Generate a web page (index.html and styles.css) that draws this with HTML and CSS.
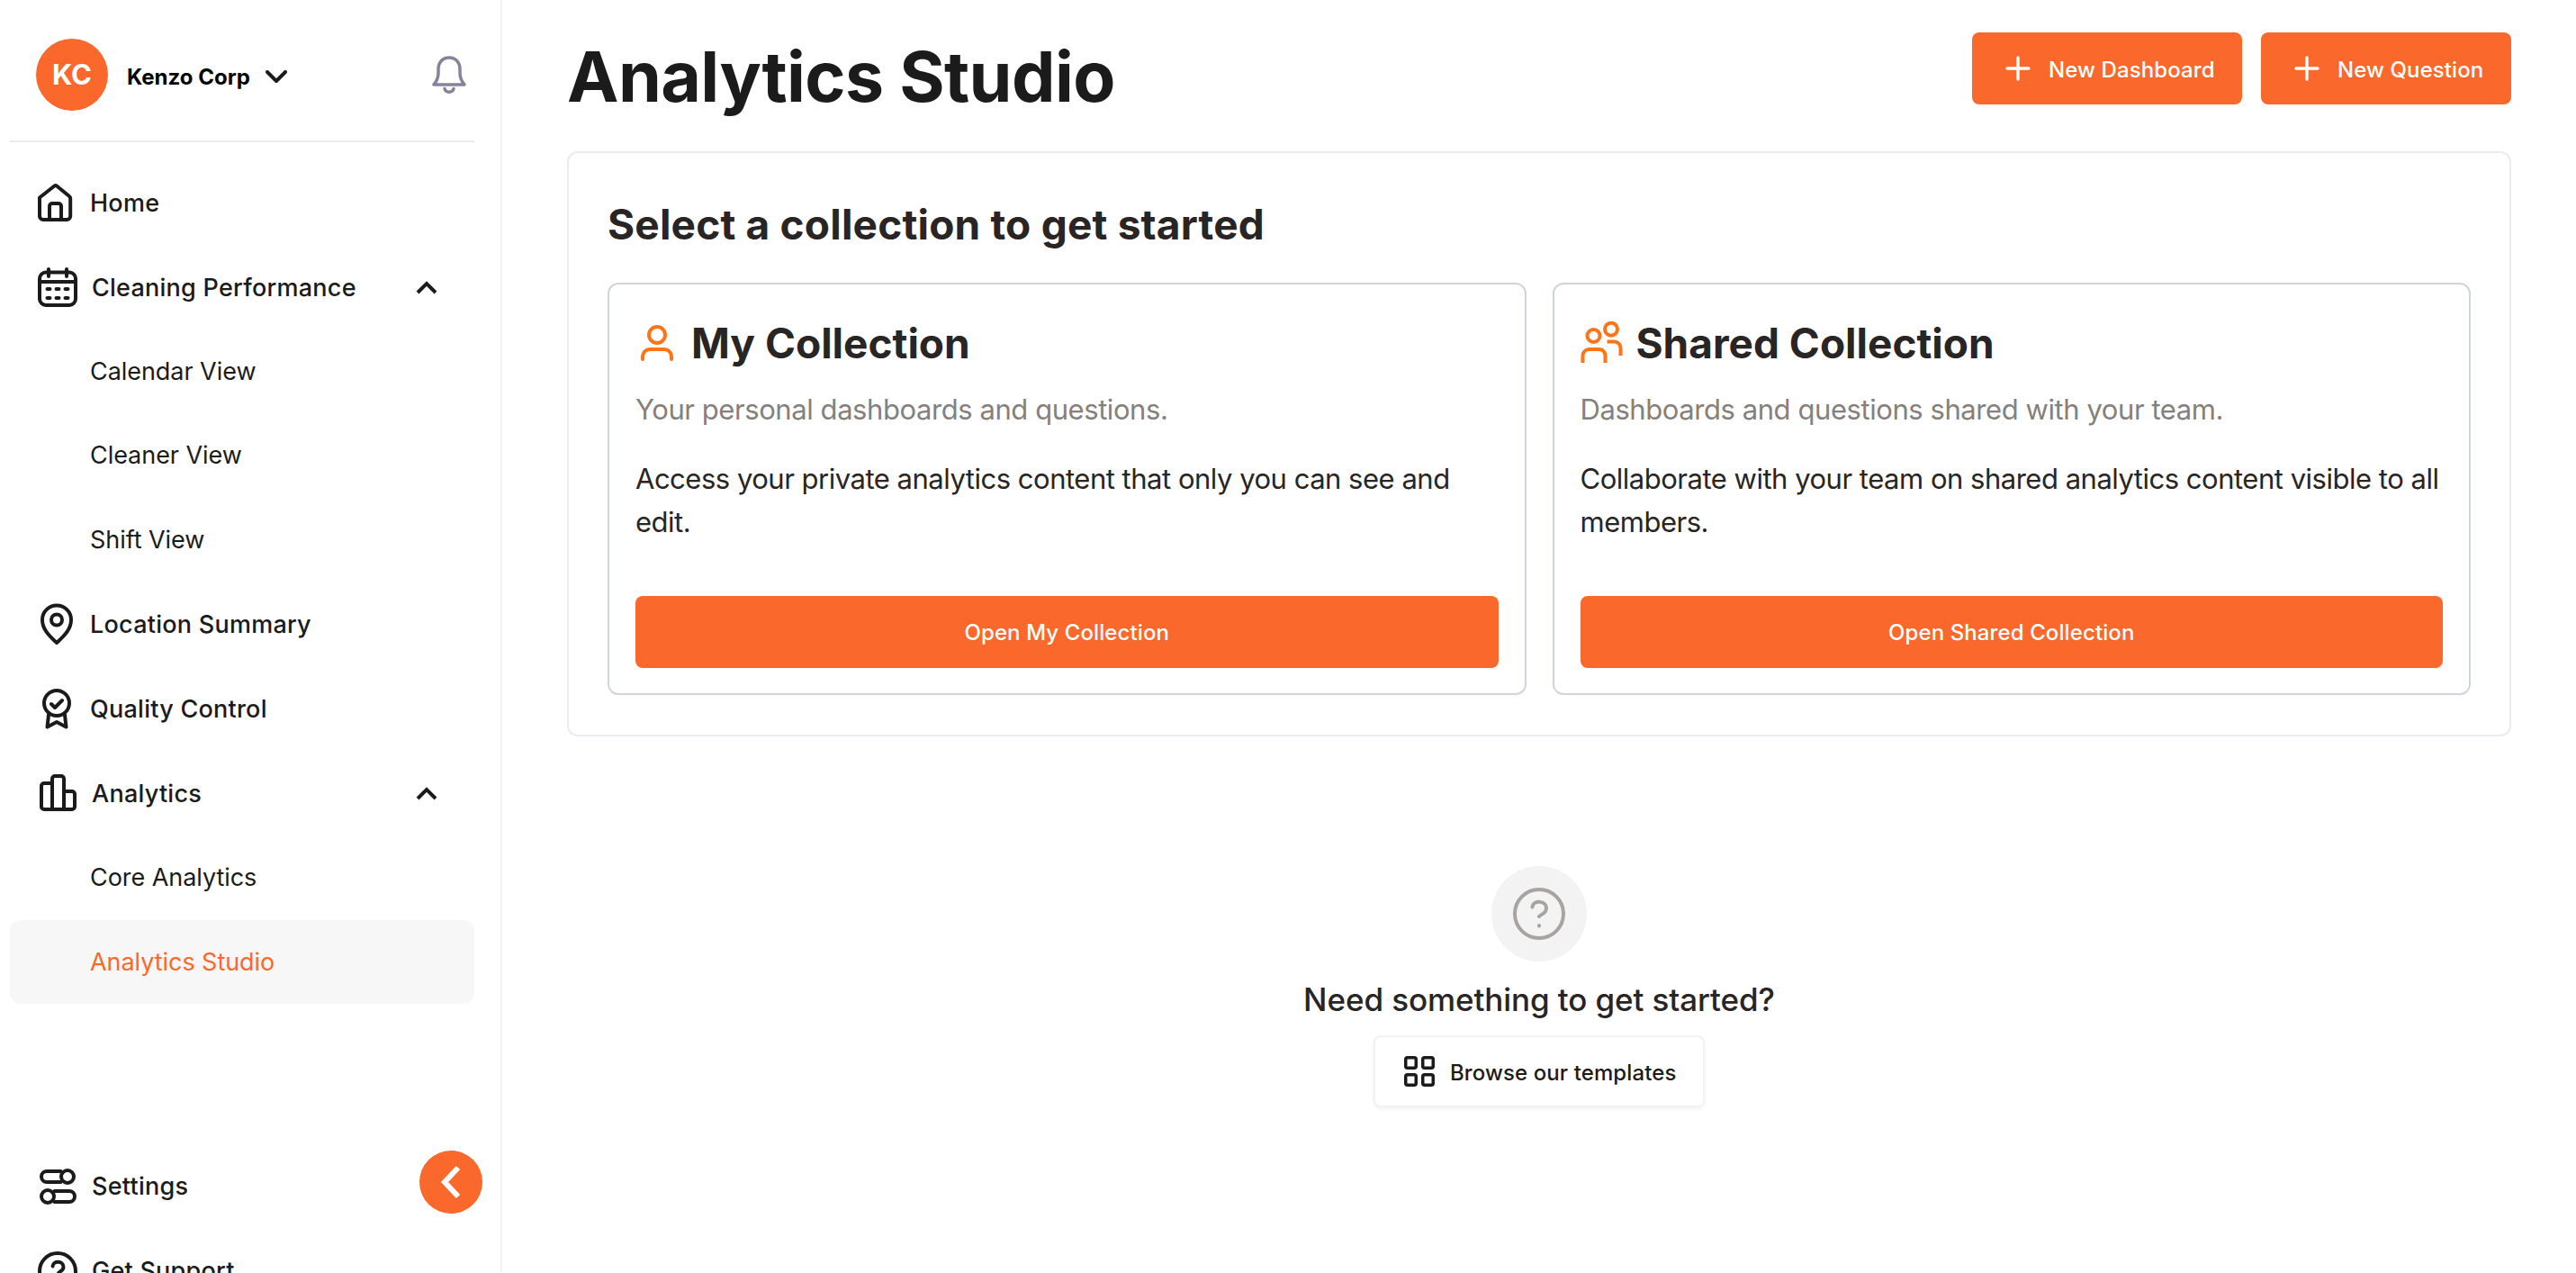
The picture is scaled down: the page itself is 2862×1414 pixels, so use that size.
FILE: index.html
```html
<!DOCTYPE html>
<html lang="en">

<head>
  <meta charset="UTF-8" />
  <meta name="viewport" content="width=device-width, initial-scale=1.0" />
  <title>Analytics Studio</title>
  <link rel="stylesheet" href="styles.css">
</head>

<body>
  <aside class="sidebar">
    <div class="account">
      <div class="avatar">KC</div>
      <span class="account-name">Kenzo Corp</span>
      <svg class="account-arrow" width="24" height="14" viewBox="0 0 24 14"><path d="M2 2l10 10L22 2" /></svg>
      <svg class="bell" width="38" height="43" viewBox="0 0 38 43">
        <path d="M2 32h34c-3-3.500-5-8-5-13v-4c0-8-5-13-12-13S7 7 7 15v4c0 5-2 9.500-5 13z" />
        <path d="M14 36.500c1 5 9 5 10 0" />
      </svg>
    </div>

    <nav class="nav">
      <a class="nav-item">
        <svg class="icon" viewBox="0 0 46 46">
          <path d="M4 17.500L20.500 4.500a2 2 0 0 1 2.500 0L37 16a3 3 0 0 1 1.200 2.500V38a4 4 0 0 1-4 4H8a4 4 0 0 1-4-4V18z" />
          <path d="M15 42V27a3 3 0 0 1 3-3h7a3 3 0 0 1 3 3v15" />
        </svg>
        <span>Home</span>
      </a>
      <a class="nav-item group">
        <svg class="icon" viewBox="0 0 46 46">
          <rect x="4" y="6.500" width="40" height="36.500" rx="7" />
          <path d="M4 17h40M14 3v8M34 3v8" />
          <path d="M12.500 25h3M22.500 25h3M32.500 25h3M12.500 35h3M22.500 35h3M32.500 35h3" />
        </svg>
        <span>Cleaning Performance</span>
        <svg class="arrow" width="24" height="15" viewBox="0 0 24 15"><path d="M2 13L12 3l10 10" /></svg>
      </a>
      <a class="nav-sub">Calendar View</a>
      <a class="nav-sub">Cleaner View</a>
      <a class="nav-sub">Shift View</a>
      <a class="nav-item">
        <svg class="icon" viewBox="0 0 46 46">
          <path d="M23 44C13 35 7 28 7 18.500a16 16 0 0 1 32 0C39 28 33 35 23 44z" />
          <circle cx="23" cy="18.500" r="6" />
        </svg>
        <span>Location Summary</span>
      </a>
      <a class="nav-item">
        <svg class="icon" viewBox="0 0 46 46">
          <circle cx="23" cy="17" r="14" />
          <path d="M17 18l4 4 8-8M14 30l-1.500 13.500L23 38l10.500 5.500L32 30" />
        </svg>
        <span>Quality Control</span>
      </a>
      <a class="nav-item group">
        <svg class="icon" viewBox="0 0 46 46">
          <path d="M18 41V7a3 3 0 0 1 3-3h7a3 3 0 0 1 3 3v34" />
          <path d="M18 12H9a3 3 0 0 0-3 3v23a3 3 0 0 0 3 3h31a3 3 0 0 0 3-3V24a3 3 0 0 0-3-3h-9" />
        </svg>
        <span>Analytics</span>
        <svg class="arrow" width="24" height="15" viewBox="0 0 24 15"><path d="M2 13L12 3l10 10" /></svg>
      </a>
      <a class="nav-sub">Core Analytics</a>
      <a class="nav-sub active">Analytics Studio</a>
    </nav>

    <div class="nav-footer">
      <a class="nav-item group">
        <svg class="icon" viewBox="0 0 46 46">
          <path d="M27.500 6H12a6 6 0 0 0 0 12h15.500M20.500 28H37a6 6 0 0 1 0 12H20.500" />
          <circle cx="35" cy="12" r="7" />
          <circle cx="13" cy="34" r="7" />
        </svg>
        <span>Settings</span>
      </a>
      <a class="nav-item group">
        <svg class="icon" viewBox="0 0 46 46">
          <circle cx="24" cy="23" r="20" />
          <path d="M18.500 17.500c0.500-6.500 12-6.500 12 1 0 5-6.500 4.500-6.500 9M24 33v0.500" />
        </svg>
        <span>Get Support</span>
      </a>
    </div>

    <button class="collapse">
      <svg width="24" height="38" viewBox="0 0 24 38"><path d="M20 3L5 19l15 16" /></svg>
    </button>
  </aside>

  <main class="main">
    <header class="header">
      <h1>Analytics Studio</h1>
      <div class="actions">
        <button class="btn new-dashboard">
          <svg class="plus" viewBox="0 0 40 40"><path d="M20 8v24M8 20h24" /></svg>
          <span>New Dashboard</span>
        </button>
        <button class="btn new-question">
          <svg class="plus" viewBox="0 0 40 40"><path d="M20 8v24M8 20h24" /></svg>
          <span>New Question</span>
        </button>
      </div>
    </header>

    <section class="panel">
      <h2>Select a collection to get started</h2>
      <div class="cards">
        <div class="card">
          <div class="card-title">
            <svg viewBox="0 0 48 48">
              <circle cx="24" cy="15" r="9" />
              <path d="M8 42v-3a8 8 0 0 1 8-8h16a8 8 0 0 1 8 8v3" />
            </svg>
            <h3>My Collection</h3>
          </div>
          <p class="card-desc">Your personal dashboards and questions.</p>
          <p class="card-text">Access your private analytics content that only you can see and edit.</p>
          <button class="btn">Open My Collection</button>
        </div>
        <div class="card">
          <div class="card-title">
            <svg class="butt" viewBox="0 0 48 48">
              <circle cx="14.500" cy="16" r="7" />
              <path d="M2.500 46v-8a7 7 0 0 1 7-7h11a7 7 0 0 1 7 7v8" />
              <circle cx="34" cy="8.700" r="7" />
              <path d="M29.500 22.500h8a7 7 0 0 1 7 7V38" />
            </svg>
            <h3>Shared Collection</h3>
          </div>
          <p class="card-desc">Dashboards and questions shared with your team.</p>
          <p class="card-text">Collaborate with your team on shared analytics content visible to all members.</p>
          <button class="btn">Open Shared Collection</button>
        </div>
      </div>
    </section>

    <section class="empty">
      <div class="empty-icon">
        <svg width="58" height="58" viewBox="0 0 58 58">
          <circle cx="29" cy="29" r="27" />
          <path d="M21.500 21.500c1-8.500 16-7 15.500 1.500-0.300 6-5.500 6-8 9M29 42v0.500" />
        </svg>
      </div>
      <p class="empty-title">Need something to get started?</p>
      <button class="browse">
        <svg width="34" height="34" viewBox="0 0 34 34">
          <rect x="1.750" y="1.750" width="11.500" height="11.500" rx="2" />
          <rect x="20.750" y="1.750" width="11.500" height="11.500" rx="2" />
          <rect x="1.750" y="20.750" width="11.500" height="11.500" rx="2" />
          <rect x="20.750" y="20.750" width="11.500" height="11.500" rx="2" />
        </svg>
        <span>Browse our templates</span>
      </button>
    </section>
  </main>
</body>

</html>
```

FILE: styles.css
```css
* {
  box-sizing: border-box;
}

body {
  margin: 0;
  display: flex;
  height: 100vh;
  overflow: hidden;
  font-family: Inter, "Liberation Sans", sans-serif;
  color: #1b1b1b;
  background-color: #fff;
}

h1,
h2,
h3,
p {
  margin: 0;
}

button {
  border: none;
  padding: 0;
  font-family: inherit;
  cursor: pointer;
}

svg {
  display: block;
  flex-shrink: 0;
  fill: none;
  stroke: currentColor;
  stroke-width: 4;
  stroke-linecap: round;
  stroke-linejoin: round;
}

/* sidebar */
.sidebar {
  position: relative;
  flex-shrink: 0;
  width: 558px;
  height: 100vh;
  padding: 0 29px 0 11px;
  border-right: 2px solid #f2f2f2;
  overflow: hidden;
}

.account {
  display: flex;
  align-items: center;
  height: 158px;
  padding: 10px 9px 0 29px;
  border-bottom: 2px solid #ebebf2;
}

.avatar {
  width: 80px;
  height: 80px;
  border-radius: 50%;
  background-color: #fa682c;
  color: #fff;
  font-size: 31px;
  font-weight: 700;
  line-height: 80px;
  text-align: center;
}

.account-name {
  margin: 4px 17px 0 21px;
  font-size: 24px;
  font-weight: 700;
  color: #000;
}

.account-arrow {
  margin-top: 4px;
}

.bell {
  margin-left: auto;
  color: #85829b;
  stroke-width: 3.5;
}

.nav {
  padding-top: 20px;
}

.nav-item {
  display: flex;
  align-items: center;
  gap: 14px;
  height: 94px;
  padding-left: 29px;
  font-size: 27px;
  font-weight: 500;
  letter-spacing: 0.25px;
}

.nav-item.group {
  gap: 16px;
}

.icon {
  width: 46px;
  height: 46px;
}

.arrow {
  margin-left: auto;
  margin-right: 41px;
  stroke-linecap: butt;
  stroke-linejoin: miter;
}

.nav-sub {
  display: block;
  height: 93.4px;
  padding-left: 89px;
  border-radius: 12px;
  font-size: 27px;
  line-height: 93px;
  letter-spacing: -0.05px;
}

.nav-sub.active {
  background-color: #f7f7f7;
  color: #fa682c;
}

.nav-footer {
  padding-top: 156px;
}

.collapse {
  position: absolute;
  top: 1278px;
  left: 466px;
  display: flex;
  align-items: center;
  justify-content: center;
  width: 70px;
  height: 70px;
  border-radius: 50%;
  background-color: #fa682c;
  color: #fff;
}

.collapse svg {
  stroke-width: 6;
  stroke-linecap: butt;
  stroke-linejoin: miter;
}

/* content */
.main {
  flex: 1;
  padding: 36px 72px 0 72px;
}

.header {
  display: flex;
  justify-content: space-between;
  height: 132px;
}

h1 {
  padding-top: 9px;
  font-size: 77px;
  line-height: 80px;
  letter-spacing: -0.6px;
}

.actions {
  display: flex;
  gap: 21px;
}

.btn {
  display: flex;
  align-items: center;
  justify-content: center;
  height: 80px;
  border-radius: 8px;
  background-color: #fa682c;
  color: #fff;
  font-size: 24px;
  font-weight: 500;
  letter-spacing: 0.1px;
}

.new-dashboard,
.new-question {
  justify-content: flex-start;
  gap: 14px;
  padding-left: 31px;
}

.new-dashboard {
  width: 300px;
}

.new-question {
  width: 278px;
}

.btn span {
  padding-top: 2px;
}

.plus {
  width: 40px;
  height: 40px;
  stroke-width: 3.3;
}

.panel {
  padding: 43px 43px 44px;
  border: 2px solid #ebebf0;
  border-radius: 12px;
  color: #282524;
}

h2 {
  margin-bottom: 29px;
  font-size: 46px;
  line-height: 72px;
  letter-spacing: 0.2px;
}

.cards {
  display: grid;
  grid-template-columns: 1fr 1fr;
  gap: 29px;
}

.card {
  padding: 41px 29px 28px;
  border: 2px solid #d0d4de;
  border-radius: 12px;
}

.card-title {
  display: flex;
  align-items: center;
  gap: 14px;
}

.card-title svg {
  width: 48px;
  height: 48px;
  color: #fd7419;
}

.card-title .butt {
  stroke-linecap: butt;
}

h3 {
  font-size: 46px;
  line-height: 48px;
}

.card-desc,
.card-text {
  font-size: 31px;
  line-height: 48px;
  letter-spacing: -0.43px;
}

.card-desc {
  margin: 26px 0 29px;
  color: #85807c;
}

.card-text {
  letter-spacing: -0.49px;
}

.card .btn {
  width: 100%;
  margin-top: 58px;
}

.empty {
  display: flex;
  flex-direction: column;
  align-items: center;
  padding-top: 144px;
}

.empty-icon {
  display: flex;
  align-items: center;
  justify-content: center;
  width: 106px;
  height: 106px;
  border-radius: 50%;
  background-color: #f3f3f3;
  color: #a8a3a1;
}

.empty-title {
  margin: 22px 0 20px;
  font-size: 35px;
  font-weight: 500;
  line-height: 40px;
  letter-spacing: -0.1px;
  color: #282524;
}

.browse {
  display: flex;
  align-items: center;
  gap: 17px;
  width: 368px;
  height: 80px;
  padding-left: 32px;
  border: 2px solid #f2f2f2;
  border-radius: 8px;
  background-color: #fff;
  box-shadow: 0 2px 4px rgba(0, 0, 0, 0.06);
  color: #1b1b1b;
  font-size: 24px;
  font-weight: 500;
  letter-spacing: 0.1px;
}

.browse span {
  padding-top: 3px;
}

.browse svg {
  stroke-width: 3.5;
}
```
